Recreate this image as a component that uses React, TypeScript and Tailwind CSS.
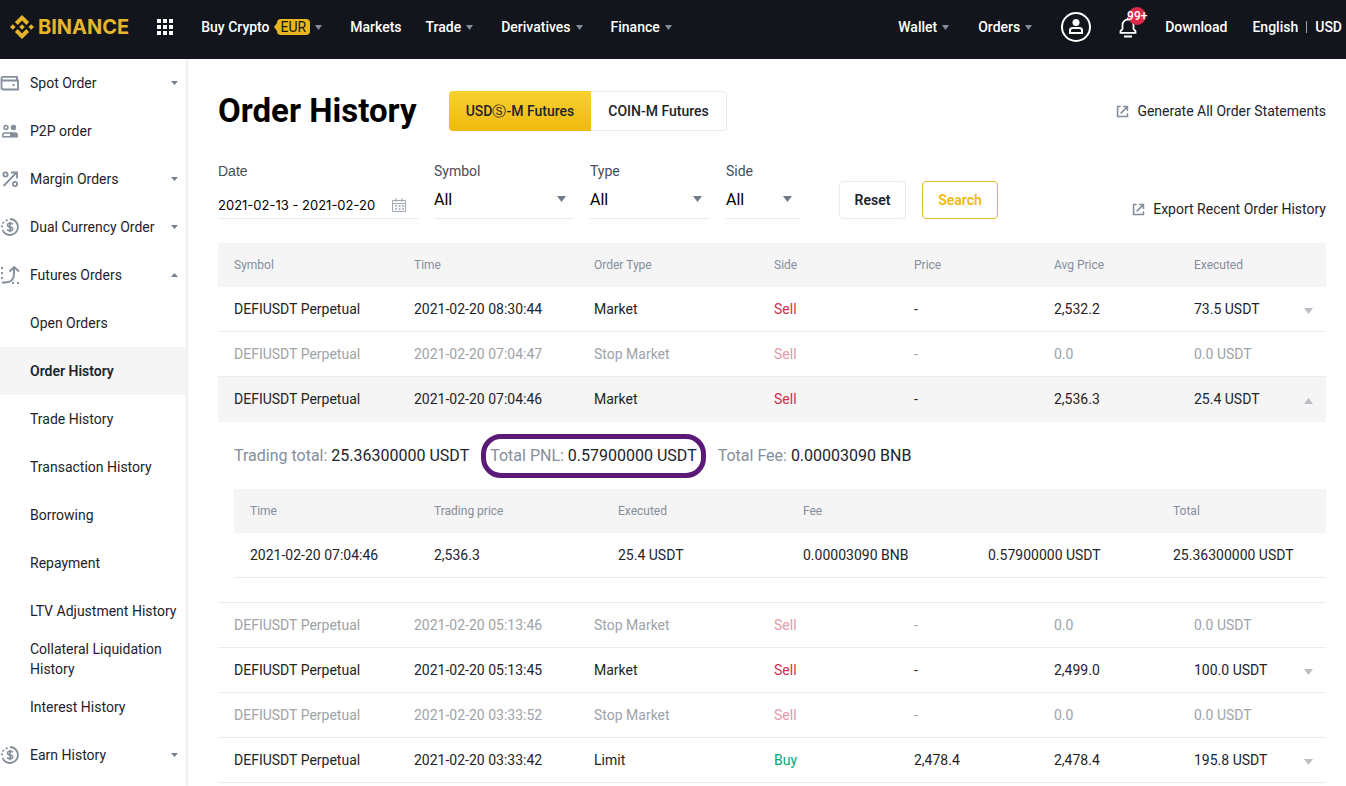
import { Fragment, useState } from 'react';
import type { ReactNode } from 'react';

type Order = {
  time: string;
  type: string;
  side: 'Sell' | 'Buy';
  price: string;
  avg: string;
  executed: string;
  filled: boolean;
};

const ORDERS: Order[] = [
  { time: '2021-02-20 08:30:44', type: 'Market', side: 'Sell', price: '-', avg: '2,532.2', executed: '73.5 USDT', filled: true },
  { time: '2021-02-20 07:04:47', type: 'Stop Market', side: 'Sell', price: '-', avg: '0.0', executed: '0.0 USDT', filled: false },
  { time: '2021-02-20 07:04:46', type: 'Market', side: 'Sell', price: '-', avg: '2,536.3', executed: '25.4 USDT', filled: true },
  { time: '2021-02-20 05:13:46', type: 'Stop Market', side: 'Sell', price: '-', avg: '0.0', executed: '0.0 USDT', filled: false },
  { time: '2021-02-20 05:13:45', type: 'Market', side: 'Sell', price: '-', avg: '2,499.0', executed: '100.0 USDT', filled: true },
  { time: '2021-02-20 03:33:52', type: 'Stop Market', side: 'Sell', price: '-', avg: '0.0', executed: '0.0 USDT', filled: false },
  { time: '2021-02-20 03:33:42', type: 'Limit', side: 'Buy', price: '2,478.4', avg: '2,478.4', executed: '195.8 USDT', filled: true },
];

const FUTURES_LINKS = [
  'Open Orders',
  'Order History',
  'Trade History',
  'Transaction History',
  'Borrowing',
  'Repayment',
  'LTV Adjustment History',
  'Collateral Liquidation History',
  'Interest History',
];

function Caret({ up = false, className = '' }: { up?: boolean; className?: string }) {
  return (
    <svg viewBox="0 0 10 7" className={className} fill="currentColor" preserveAspectRatio="none" aria-hidden="true">
      <path d={up ? 'M0 7h10L5 0z' : 'M0 0h10L5 7z'} />
    </svg>
  );
}

function NavLink({ label, menu = false, children }: { label: string; menu?: boolean; children?: ReactNode }) {
  return (
    <a href="#" className="flex items-center whitespace-nowrap hover:text-[#f0b90b]">
      {label}
      {children}
      {menu && <Caret className="mr-1 ml-[5px] h-[5px] w-[7px] text-[#848e9c]" />}
    </a>
  );
}

function Logo() {
  return (
    <a href="#" className="flex items-center text-[#e6b52c]">
      <svg viewBox="0 0 24 24" className="h-6 w-6" fill="currentColor" aria-hidden="true">
        <path d="M12 0l7.1 7.1-2.8 2.8L12 5.6 7.7 9.9 4.9 7.1zM12 24l7.1-7.1-2.8-2.8-4.3 4.3-4.3-4.3-2.8 2.8zM2.8 9.2L5.6 12l-2.8 2.8L0 12zM21.2 9.2L24 12l-2.8 2.8-2.8-2.8zM12 9.2l2.8 2.8-2.8 2.8L9.2 12z" />
      </svg>
      <span className="ml-1 font-['Inter',sans-serif] text-[20px] leading-6 font-bold">BINANCE</span>
    </a>
  );
}

function Header() {
  return (
    <header className="flex h-[59px] items-center justify-between bg-[#12161c] pr-1 pb-[5px] pl-[10px] text-sm font-medium text-white">
      <nav className="flex items-center gap-6">
        <div className="flex items-center gap-7">
          <Logo />
          <button type="button" aria-label="Products">
            <svg viewBox="0 0 16 16" className="h-4 w-4" fill="currentColor" aria-hidden="true">
              <path d="M0 0h4v4H0zM6 0h4v4H6zM12 0h4v4h-4zM0 6h4v4H0zM6 6h4v4H6zM12 6h4v4h-4zM0 12h4v4H0zM6 12h4v4H6zM12 12h4v4h-4z" />
            </svg>
          </button>
          <NavLink label="Buy Crypto" menu>
            <svg viewBox="0 0 3 8" className="ml-1 h-2 w-[3px] text-[#e9b620]" fill="currentColor" aria-hidden="true">
              <path d="M3 0v8L0 4z" />
            </svg>
            <span className="rounded bg-[#e9b620] px-1 text-sm leading-4 font-normal text-[#12161c]">EUR</span>
          </NavLink>
        </div>
        <NavLink label="Markets" />
        <NavLink label="Trade" menu />
        <NavLink label="Derivatives" menu />
        <NavLink label="Finance" menu />
      </nav>
      <nav className="flex items-center gap-[25px]">
        <NavLink label="Wallet" menu />
        <NavLink label="Orders" menu />
        <button type="button" aria-label="Account">
          <svg viewBox="0 0 30 30" className="h-[30px] w-[30px]" aria-hidden="true">
            <circle cx="15" cy="15" r="14" fill="none" stroke="currentColor" strokeWidth="2" />
            <circle cx="15" cy="10.5" r="3.5" fill="currentColor" />
            <path d="M9 21v-2.500q0-2.500 2.500-2.500h7q2.500 0 2.500 2.500V21z" fill="none" stroke="currentColor" strokeWidth="2" />
          </svg>
        </button>
        <button type="button" aria-label="Notifications" className="relative">
          <svg viewBox="0 0 24 24" className="h-6 w-6" fill="none" stroke="currentColor" strokeWidth="1.800" aria-hidden="true">
            <path d="M12 2.500v2M6.500 14v-4a5.500 5.500 0 0 1 11 0v4l2 2v1.800h-15V16z" />
            <path d="M8 21.500h8" strokeWidth="2" />
          </svg>
          <span className="absolute -top-2 left-3 flex h-[18px] w-[18px] items-center justify-center rounded-full bg-[#e0294a] text-xs">
            99+
          </span>
        </button>
        <NavLink label="Download" />
        <div className="flex items-center gap-2">
          <NavLink label="English" />
          <span className="h-3 w-px bg-[#a0a5ac]" />
          <NavLink label="USD" />
        </div>
      </nav>
    </header>
  );
}

const icons: Record<string, ReactNode> = {
  wallet: (
    <>
      <path d="M17 7V3.900H3.500Q1.500 3.900 1.500 5.500v9q0 2 2 2H18V7.500H2" fill="none" stroke="currentColor" strokeWidth="1.800" />
      <path d="M12.500 11h2v2h-2z" />
    </>
  ),
  people: (
    <>
      <circle cx="6" cy="6.500" r="1.900" fill="none" stroke="currentColor" strokeWidth="1.500" />
      <circle cx="13.500" cy="6.500" r="2.700" />
      <path d="M2.800 15.800v-1.800q0-2 2-2H11v3.800z" fill="none" stroke="currentColor" strokeWidth="1.500" />
      <path d="M10 11.300h5q3 0 3 3v2.200h-8z" />
    </>
  ),
  percent: (
    <g fill="none" stroke="currentColor" strokeWidth="1.800">
      <circle cx="5.500" cy="5.500" r="2.100" />
      <circle cx="15" cy="15" r="2.100" />
      <path d="M3.500 17L16.500 3.700M11 3.500h6v6" />
    </g>
  ),
  coin: (
    <>
      <path d="M10 2a8 8 0 1 1-7.500 11" fill="none" stroke="currentColor" strokeWidth="1.800" />
      <path d="M7.500 2.800L3 6 1.500 11" fill="none" stroke="currentColor" strokeWidth="1.800" strokeDasharray="2 2" />
      <path d="M12.700 7.300Q12 6.300 10 6.300q-2.500 0-2.500 1.800T10 10t2.600 1.900T10 13.700q-2 0-2.800-1.200M10 4.700v10.600" fill="none" stroke="currentColor" strokeWidth="1.600" />
    </>
  ),
  futures: (
    <g fill="none" stroke="currentColor" strokeWidth="1.900">
      <path d="M2 17.500h3q9 0 9-9V2M9.500 6.500L14.200 2 19 6.500" />
      <path d="M2 2v14M12 18h8" strokeDasharray="2 3" />
    </g>
  ),
};

function SideLink({ icon, label, menu = false, open = false }: { icon: string; label: string; menu?: boolean; open?: boolean }) {
  return (
    <a href="#" className="flex h-12 items-center pr-2">
      <svg viewBox="0 0 20 20" className="mr-[10px] h-5 w-5 shrink-0 text-[#848e9c]" fill="currentColor" aria-hidden="true">
        {icons[icon]}
      </svg>
      <span className="flex-1 whitespace-nowrap">{label}</span>
      {menu && <Caret up={open} className="h-1 w-[7px] text-[#76808f]" />}
    </a>
  );
}

function Sidebar() {
  return (
    <aside className="w-[187px] shrink-0 border-r border-[#eaecef] text-sm leading-5 text-[#1e2329] shadow-sm">
      <SideLink icon="wallet" label="Spot Order" menu />
      <SideLink icon="people" label="P2P order" />
      <SideLink icon="percent" label="Margin Orders" menu />
      <SideLink icon="coin" label="Dual Currency Order" menu />
      <SideLink icon="futures" label="Futures Orders" menu open />
      {FUTURES_LINKS.map((label) => (
        <a
          key={label}
          href="#"
          className={
            label === 'Order History'
              ? 'flex h-12 items-center bg-[#f5f5f5] pr-1 pl-[30px] font-semibold'
              : 'flex h-12 items-center pr-1 pl-[30px]'
          }
        >
          {label}
        </a>
      ))}
      <SideLink icon="coin" label="Earn History" menu />
    </aside>
  );
}

function ExternalLink({ label }: { label: string }) {
  return (
    <a href="#" className="flex h-5 items-center gap-2 whitespace-nowrap text-sm text-[#1e2329]">
      <svg viewBox="0 0 14 14" className="h-[13px] w-[13px] text-[#848e9c]" fill="none" stroke="currentColor" strokeWidth="1.700" aria-hidden="true">
        <path d="M5 1.700H1.700v10.600h10.600V9M7.500 1.700h4.800v4.800M12 2L5 9" />
      </svg>
      {label}
    </a>
  );
}

function SelectField({ id, label, className }: { id: string; label: string; className: string }) {
  return (
    <div className={className}>
      <label htmlFor={id} className="block text-sm leading-5 text-[#474d57]">
        {label}
      </label>
      <div className="relative">
        <select id={id} className="h-[38px] w-full appearance-none border-b border-[#eaecef] bg-transparent text-base text-black outline-none">
          <option>All</option>
        </select>
        <Caret className="pointer-events-none absolute top-[15px] right-2 h-[6px] w-[9px] text-[#707a8a]" />
      </div>
    </div>
  );
}

function Filters() {
  const [range, setRange] = useState('2021-02-13 - 2021-02-20');

  return (
    <form className="mt-[30px] flex items-end" onSubmit={(e) => e.preventDefault()}>
      <div className="flex items-end gap-4">
        <div className="w-[200px]">
          <label htmlFor="date" className="block font-['Liberation_Sans',sans-serif] text-sm leading-5 text-[#474d57]">
            Date
          </label>
          <div className="flex h-[38px] items-center border-b border-[#eaecef] pt-[10px] pr-3">
            <input
              id="date"
              value={range}
              onChange={(e) => setRange(e.target.value)}
              className="w-full min-w-0 flex-1 font-['Inter',sans-serif] text-[13px] leading-5 text-black outline-none"
            />
            <svg viewBox="0 0 14 14" className="h-[14px] w-[14px] text-[#a3a9b3]" fill="none" stroke="currentColor" aria-hidden="true">
              <path d="M.5 2.500h13v11H.5zM.5 5.500h13M4 0v4M10 0v4" />
              <path d="M3 8h9M3 11h9" strokeWidth="1.500" strokeDasharray="2 1.500" />
            </svg>
          </div>
        </div>
        <SelectField id="symbol" label="Symbol" className="w-[140px]" />
        <SelectField id="type" label="Type" className="w-[120px]" />
        <SelectField id="side" label="Side" className="w-[74px]" />
      </div>
      <div className="ml-[39px] flex gap-4">
        <button type="button" className="h-[38px] w-[67px] rounded border border-[#eaecef] text-sm font-semibold text-[#1e2329]">
          Reset
        </button>
        <button type="submit" className="h-[38px] w-[76px] rounded border border-[#e3b92c] text-sm font-semibold text-[#f0b90b]">
          Search
        </button>
      </div>
      <div className="ml-auto">
        <ExternalLink label="Export Recent Order History" />
      </div>
    </form>
  );
}

function OrderDetail() {
  return (
    <div className="pb-6 pl-4">
      <div className="flex h-[67px] items-center text-base whitespace-nowrap text-[#1e2329]">
        <p>
          <span className="text-[#848e9c]">Trading total:</span> 25.36300000 USDT
        </p>
        <p className="ml-3 rounded-[20px] border-[5px] border-[#5b1a78] px-1 py-[5px]">
          <span className="text-[#848e9c]">Total PNL:</span> 0.57900000 USDT
        </p>
        <p className="ml-3">
          <span className="text-[#848e9c]">Total Fee:</span> 0.00003090 BNB
        </p>
      </div>
      <table className="w-full table-fixed border-separate border-spacing-0 text-left">
        <thead className="bg-[#f5f5f5] text-xs text-[#848e9c]">
          <tr className="h-11">
            <th className="w-[184px] pl-4 font-normal">Time</th>
            <th className="w-[184px] pl-4 font-normal">Trading price</th>
            <th className="w-[185px] pl-4 font-normal">Executed</th>
            <th className="w-[185px] pl-4 font-normal">Fee</th>
            <th className="w-[185px] pl-4 font-normal"></th>
            <th className="pl-4 font-normal">Total</th>
          </tr>
        </thead>
        <tbody>
          <tr className="h-[45px] *:border-b *:border-[#eaecef] *:pl-4">
            <td>2021-02-20 07:04:46</td>
            <td>2,536.3</td>
            <td>25.4 USDT</td>
            <td>0.00003090 BNB</td>
            <td>0.57900000 USDT</td>
            <td>25.36300000 USDT</td>
          </tr>
        </tbody>
      </table>
    </div>
  );
}

function OrdersTable() {
  const [openRow, setOpenRow] = useState<number | null>(2);

  return (
    <table className="mt-6 w-full table-fixed border-separate border-spacing-0 text-left text-sm leading-5 whitespace-nowrap text-[#1e2329]">
      <thead className="bg-[#f5f5f5] text-xs text-[#848e9c]">
        <tr className="h-11">
          <th className="w-[180px] pl-4 font-normal">Symbol</th>
          <th className="w-[180px] pl-4 font-normal">Time</th>
          <th className="w-[180px] pl-4 font-normal">Order Type</th>
          <th className="w-[140px] pl-4 font-normal">Side</th>
          <th className="w-[140px] pl-4 font-normal">Price</th>
          <th className="w-[140px] pl-4 font-normal">Avg Price</th>
          <th className="pl-4 font-normal">Executed</th>
          <th className="w-[34px]"></th>
        </tr>
      </thead>
      <tbody>
        {ORDERS.map((order, i) => {
          const open = openRow === i;
          return (
            <Fragment key={order.time}>
              <tr
                className={`h-[45px] *:border-b ${open ? 'bg-[#f5f5f5] *:border-[#f5f5f5]' : '*:border-[#eaecef]'} ${order.filled ? '' : 'text-[#a0a3a7]'}`}
              >
                <td className="pl-4">DEFIUSDT Perpetual</td>
                <td className="pl-4">{order.time}</td>
                <td className="pl-4">{order.type}</td>
                <td className={`pl-4 ${order.side === 'Buy' ? 'text-[#03a66d]' : order.filled ? 'text-[#cf304a]' : 'text-[#e39aa7]'}`}>
                  {order.side}
                </td>
                <td className="pl-4">{order.price}</td>
                <td className="pl-4">{order.avg}</td>
                <td className="pl-4">{order.executed}</td>
                <td className="pt-1 pr-[13px]">
                  {order.filled && (
                    <button type="button" aria-label="Toggle details" className="ml-auto block" onClick={() => setOpenRow(open ? null : i)}>
                      <Caret up={open} className="h-[6px] w-[9px] text-[#bbbec3]" />
                    </button>
                  )}
                </td>
              </tr>
              {open && (
                <tr>
                  <td colSpan={8} className="border-b border-[#eaecef]">
                    <OrderDetail />
                  </td>
                </tr>
              )}
            </Fragment>
          );
        })}
      </tbody>
    </table>
  );
}

export default function App() {
  return (
    <div className="flex min-h-screen flex-col bg-white font-['Roboto','Liberation_Sans',sans-serif]">
      <Header />
      <div className="flex flex-1">
        <Sidebar />
        <main className="min-w-0 flex-1 pt-8 pr-5 pl-[31px]">
          <div className="flex items-center">
            <h1 className="w-[199px] text-[33px] leading-10 font-bold whitespace-nowrap text-black">Order History</h1>
            <div className="ml-8 flex h-10 text-sm font-medium text-[#1e2329]">
              <button type="button" className="w-[142px] rounded-l bg-linear-to-b from-[#f8d12f] to-[#f0b90b]">
                USDⓈ-M Futures
              </button>
              <button type="button" className="w-[136px] rounded-r border border-l-0 border-[#eaecef]">
                COIN-M Futures
              </button>
            </div>
            <div className="ml-auto">
              <ExternalLink label="Generate All Order Statements" />
            </div>
          </div>
          <Filters />
          <OrdersTable />
        </main>
      </div>
    </div>
  );
}
